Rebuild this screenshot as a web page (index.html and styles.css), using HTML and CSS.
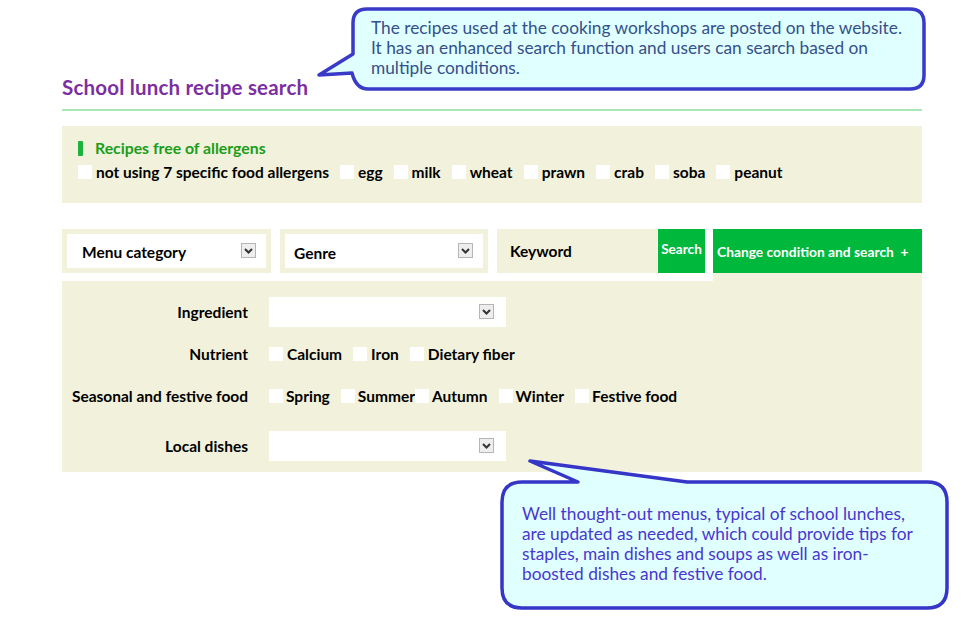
FILE: index.html
```
<!DOCTYPE html>
<html lang="en">
<head>
    <meta charset="UTF-8">
    <meta name="viewport" content="width=device-width, initial-scale=1.0">
    <title>School lunch recipe search</title>
    <link rel="stylesheet" href="styles.css">
</head>
<body>
    <div class="page">
        <h1 class="title">School lunch recipe search</h1>

        <div class="allergen-box">
            <p class="allergen-head"><span class="bar"></span>Recipes free of allergens</p>
            <div class="checks allergens">
                <label class="check"><span class="box"></span>not using 7 specific food allergens</label>
                <label class="check"><span class="box"></span>egg</label>
                <label class="check"><span class="box"></span>milk</label>
                <label class="check"><span class="box"></span>wheat</label>
                <label class="check"><span class="box"></span>prawn</label>
                <label class="check"><span class="box"></span>crab</label>
                <label class="check"><span class="box"></span>soba</label>
                <label class="check"><span class="box"></span>peanut</label>
            </div>
        </div>

        <div class="search-row">
            <div class="select sel-menu">
                <span>Menu category</span>
                <svg class="arrow" width="15" height="15" viewBox="0 0 15 15"><rect x="0.5" y="0.5" width="14" height="14" fill="#eeeeee" stroke="#b5b5b5"/><path d="M4 6 L7.5 9.5 L11 6" fill="none" stroke="#333" stroke-width="2"/></svg>
            </div>
            <div class="select sel-genre">
                <span>Genre</span>
                <svg class="arrow" width="15" height="15" viewBox="0 0 15 15"><rect x="0.5" y="0.5" width="14" height="14" fill="#eeeeee" stroke="#b5b5b5"/><path d="M4 6 L7.5 9.5 L11 6" fill="none" stroke="#333" stroke-width="2"/></svg>
            </div>
            <div class="keyword">Keyword</div>
            <div class="btn-search">Search</div>
            <div class="btn-change">Change condition and search &nbsp;+</div>
        </div>

        <div class="panel">
            <div class="row">
                <div class="label">Ingredient</div>
                <div class="field">
                    <div class="dropdown">
                        <svg class="arrow" width="15" height="15" viewBox="0 0 15 15"><rect x="0.5" y="0.5" width="14" height="14" fill="#eeeeee" stroke="#b5b5b5"/><path d="M4 6 L7.5 9.5 L11 6" fill="none" stroke="#333" stroke-width="2"/></svg>
                    </div>
                </div>
            </div>
            <div class="row">
                <div class="label">Nutrient</div>
                <div class="field checks">
                    <label class="check"><span class="box"></span>Calcium</label>
                    <label class="check"><span class="box"></span>Iron</label>
                    <label class="check"><span class="box"></span>Dietary fiber</label>
                </div>
            </div>
            <div class="row">
                <div class="label">Seasonal and festive food</div>
                <div class="field checks season">
                    <label class="check"><span class="box"></span>Spring</label>
                    <label class="check"><span class="box"></span>Summer</label>
                    <label class="check tight"><span class="box"></span>Autumn</label>
                    <label class="check"><span class="box"></span>Winter</label>
                    <label class="check"><span class="box"></span>Festive food</label>
                </div>
            </div>
            <div class="row row-last">
                <div class="label">Local dishes</div>
                <div class="field">
                    <div class="dropdown">
                        <svg class="arrow" width="15" height="15" viewBox="0 0 15 15"><rect x="0.5" y="0.5" width="14" height="14" fill="#eeeeee" stroke="#b5b5b5"/><path d="M4 6 L7.5 9.5 L11 6" fill="none" stroke="#333" stroke-width="2"/></svg>
                    </div>
                </div>
            </div>
        </div>
    </div>

    <div class="callout callout-top">
        <svg class="shape" width="969" height="100" viewBox="0 0 969 100">
            <path d="M367 9 H910 Q924 9 924 23 V75 Q924 89 910 89 H368 Q356 89 352 73 L319 75 L353 54 V23 Q353 9 367 9 Z" fill="#e0ffff" stroke="#3a3ac8" stroke-width="3.5" stroke-linejoin="round"/>
        </svg>
        <p class="callout-text">The recipes used at the cooking workshops are posted on the website.<br>It has an enhanced search function and users can search based on<br>multiple conditions.</p>
    </div>

    <div class="callout callout-bottom">
        <svg class="shape" width="969" height="619" viewBox="0 0 969 619">
            <path d="M522 482 H578 L530 461 L687 482 H927 Q947 482 947 502 V588 Q947 608 927 608 H522 Q502 608 502 588 V502 Q502 482 522 482 Z" fill="#e0ffff" stroke="#3535c8" stroke-width="3.5" stroke-linejoin="round"/>
        </svg>
        <p class="callout-text">Well thought-out menus, typical of school lunches,<br>are updated as needed, which could provide tips for<br>staples, main dishes and soups as well as iron-<br>boosted dishes and festive food.</p>
    </div>
</body>
</html>
```

FILE: styles.css
```
body {
    margin: 0;
    background: #ffffff;
    font-family: Lato, "Open Sans", sans-serif;
    color: #000;
}

.page {
    width: 860px;
    margin-left: 62px;
    padding-top: 74px;
}

.title {
    margin: 0;
    padding-bottom: 8px;
    font-size: 20.5px;
    font-weight: bold;
    letter-spacing: 0.2px;
    color: #7b2fa3;
    line-height: 27px;
    border-bottom: 2px solid #a8e8b4;
}

.allergen-box {
    margin-top: 15px;
    height: 77px;
    box-sizing: border-box;
    padding: 12px 16px 0;
    background: #f2f2dc;
}

.allergen-head {
    margin: 0 0 4px;
    display: flex;
    align-items: center;
    font-size: 15.8px;
    font-weight: bold;
    color: #1a9e1a;
    line-height: 20px;
}
.allergen-head .bar {
    width: 5px;
    height: 15px;
    margin-right: 12px;
    background: #1db23e;
    border-radius: 1px;
}

.checks {
    display: flex;
    align-items: center;
    gap: 11px;
}
.allergens {
    gap: 11px;
}
.check {
    display: flex;
    align-items: center;
    font-size: 15.5px;
    font-weight: bold;
    line-height: 20px;
}
.check .box {
    width: 14px;
    height: 14px;
    margin-right: 4px;
    background: #fff;
}

.search-row {
    margin-top: 26px;
    display: flex;
    height: 44px;
}
.select {
    box-sizing: border-box;
    border: 5px solid #f2f2dc;
    background: #fff;
    display: flex;
    align-items: center;
    justify-content: space-between;
    font-size: 15.5px;
    font-weight: bold;
}
.sel-menu {
    width: 209px;
    padding: 0 10px 0 15px;
    margin-right: 9px;
}
.sel-menu span {
    margin-top: 1px;
}
.sel-genre {
    width: 208px;
    padding: 0 10px 0 9px;
    margin-right: 9px;
}
.sel-genre span {
    margin-top: 3px;
}
.arrow {
    display: block;
    margin-top: -2px;
}
.keyword {
    width: 160px;
    box-sizing: border-box;
    padding-left: 13px;
    background: #f2f2dc;
    display: flex;
    align-items: center;
    font-size: 15.5px;
    font-weight: bold;
}
.btn-search {
    width: 47px;
    margin-left: 1px;
    padding-top: 12px;
    box-sizing: border-box;
    background: #00b83c;
    color: #fff;
    font-size: 13.6px;
    font-weight: bold;
    text-align: center;
}
.btn-change {
    width: 209px;
    margin-left: 8px;
    box-sizing: border-box;
    padding-left: 4px;
    background: #00b83c;
    color: #fff;
    font-size: 13.8px;
    font-weight: bold;
    display: flex;
    align-items: center;
    box-shadow: 0 8px 0 #f2f2dc;
}

.panel {
    margin-top: 8px;
    padding: 16px 0 11px;
    background: #f2f2dc;
    display: flex;
    flex-direction: column;
    gap: 12px;
}
.row {
    display: flex;
    align-items: center;
    height: 30px;
}
.row-last {
    margin-top: 8px;
}
.label {
    width: 186px;
    margin-right: 21px;
    text-align: right;
    font-size: 15.5px;
    font-weight: bold;
    white-space: nowrap;
}
.dropdown {
    width: 237px;
    height: 30px;
    box-sizing: border-box;
    padding-right: 12px;
    background: #fff;
    display: flex;
    align-items: center;
    justify-content: flex-end;
}
.season .check .box {
    margin-right: 3px;
}
.season .tight {
    margin-left: -11px;
}

.callout {
    position: absolute;
    top: 0;
    left: 0;
}
.shape {
    position: absolute;
    top: 0;
    left: 0;
}
.callout-text {
    position: absolute;
    margin: 0;
    font-size: 17.3px;
    line-height: 20px;
    white-space: nowrap;
}
.callout-top .callout-text {
    left: 371px;
    top: 18px;
    color: #34508a;
}
.callout-bottom .callout-text {
    left: 522px;
    top: 504px;
    color: #4a36cf;
}
```
